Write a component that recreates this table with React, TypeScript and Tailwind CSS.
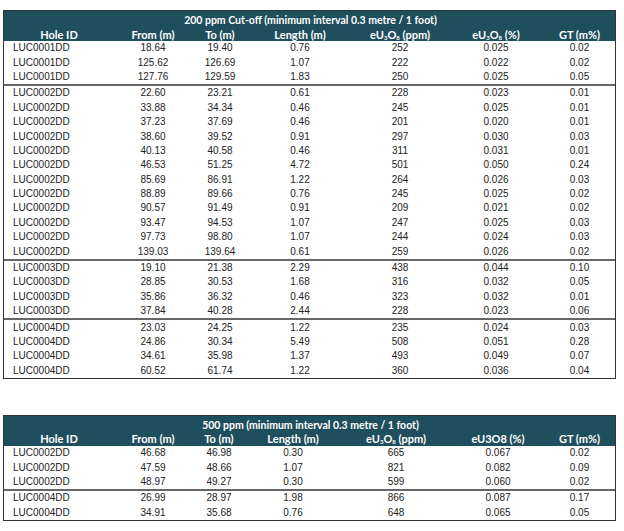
const t1 = [
  [
    ["LUC0001DD", "18.64", "19.40", "0.76", "252", "0.025", "0.02"],
    ["LUC0001DD", "125.62", "126.69", "1.07", "222", "0.022", "0.02"],
    ["LUC0001DD", "127.76", "129.59", "1.83", "250", "0.025", "0.05"],
  ],
  [
    ["LUC0002DD", "22.60", "23.21", "0.61", "228", "0.023", "0.01"],
    ["LUC0002DD", "33.88", "34.34", "0.46", "245", "0.025", "0.01"],
    ["LUC0002DD", "37.23", "37.69", "0.46", "201", "0.020", "0.01"],
    ["LUC0002DD", "38.60", "39.52", "0.91", "297", "0.030", "0.03"],
    ["LUC0002DD", "40.13", "40.58", "0.46", "311", "0.031", "0.01"],
    ["LUC0002DD", "46.53", "51.25", "4.72", "501", "0.050", "0.24"],
    ["LUC0002DD", "85.69", "86.91", "1.22", "264", "0.026", "0.03"],
    ["LUC0002DD", "88.89", "89.66", "0.76", "245", "0.025", "0.02"],
    ["LUC0002DD", "90.57", "91.49", "0.91", "209", "0.021", "0.02"],
    ["LUC0002DD", "93.47", "94.53", "1.07", "247", "0.025", "0.03"],
    ["LUC0002DD", "97.73", "98.80", "1.07", "244", "0.024", "0.03"],
    ["LUC0002DD", "139.03", "139.64", "0.61", "259", "0.026", "0.02"],
  ],
  [
    ["LUC0003DD", "19.10", "21.38", "2.29", "438", "0.044", "0.10"],
    ["LUC0003DD", "28.85", "30.53", "1.68", "316", "0.032", "0.05"],
    ["LUC0003DD", "35.86", "36.32", "0.46", "323", "0.032", "0.01"],
    ["LUC0003DD", "37.84", "40.28", "2.44", "228", "0.023", "0.06"],
  ],
  [
    ["LUC0004DD", "23.03", "24.25", "1.22", "235", "0.024", "0.03"],
    ["LUC0004DD", "24.86", "30.34", "5.49", "508", "0.051", "0.28"],
    ["LUC0004DD", "34.61", "35.98", "1.37", "493", "0.049", "0.07"],
    ["LUC0004DD", "60.52", "61.74", "1.22", "360", "0.036", "0.04"],
  ],
]

const t2 = [
  [
    ["LUC0002DD", "46.68", "46.98", "0.30", "665", "0.067", "0.02"],
    ["LUC0002DD", "47.59", "48.66", "1.07", "821", "0.082", "0.09"],
    ["LUC0002DD", "48.97", "49.27", "0.30", "599", "0.060", "0.02"],
  ],
  [
    ["LUC0004DD", "26.99", "28.97", "1.98", "866", "0.087", "0.17"],
    ["LUC0004DD", "34.91", "35.68", "0.76", "648", "0.065", "0.05"],
  ],
]

function U3O8() {
  return (
    <>
      eU<sub className="text-[6px] align-baseline relative top-[1px]">3</sub>O<sub className="text-[6px] align-baseline relative top-[1px]">8</sub>
    </>
  )
}

function DataTable({ title, cols, groups, pctLabel }: { title: string; cols: string; groups: string[][][]; pctLabel: React.ReactNode }) {
  const heads: React.ReactNode[] = [
    "Hole ID",
    "From (m)",
    "To (m)",
    "Length (m)",
    <>
      <U3O8 /> (ppm)
    </>,
    pctLabel,
    "GT (m%)",
  ]
  return (
    <div className="w-[613px] border border-[#333]">
      <div className="bg-[#1f4e5c] text-white font-bold leading-none" style={{ fontFamily: "Lato, 'Open Sans', sans-serif" }}>
        <div className="h-[16px] pt-[2px] flex items-center justify-center pl-[2px] text-[10.5px]">{title}</div>
        <div className={`grid ${cols} h-[14px] items-center text-[11px]`}>
          {heads.map((h, i) => (
            <div key={i} className="text-center whitespace-nowrap">
              {h}
            </div>
          ))}
        </div>
      </div>
      <div className="text-[10px] text-[#222]" style={{ fontFamily: "'Liberation Sans', Arial, sans-serif" }}>
        {groups.map((g, gi) => (
          <div key={gi} className={gi > 0 ? "border-t-2 border-[#666]" : ""}>
            {g.map((r, ri) => (
              <div key={ri} className={`grid ${cols} h-[14.4px] items-center leading-none`}>
                {r.map((c, ci) => (
                  <div key={ci} className={ci === 0 ? "pl-[9px]" : "text-center"}>
                    {c}
                  </div>
                ))}
              </div>
            ))}
          </div>
        ))}
      </div>
    </div>
  )
}

export default function App() {
  return (
    <div className="bg-white w-[624px] h-[531px] pt-[10px] pl-[3px] flex flex-col gap-[36px]">
      <DataTable
        title="200 ppm Cut-off (minimum interval 0.3 metre / 1 foot)"
        cols="grid-cols-[110px_78px_56px_104px_96px_96px_71px]"
        groups={t1}
        pctLabel={
          <>
            <U3O8 /> (%)
          </>
        }
      />
      <DataTable
        title="500 ppm (minimum interval 0.3 metre / 1 foot)"
        cols="grid-cols-[110px_78px_54px_94px_112px_92px_71px]"
        groups={t2}
        pctLabel="eU3O8 (%)"
      />
    </div>
  )
}
